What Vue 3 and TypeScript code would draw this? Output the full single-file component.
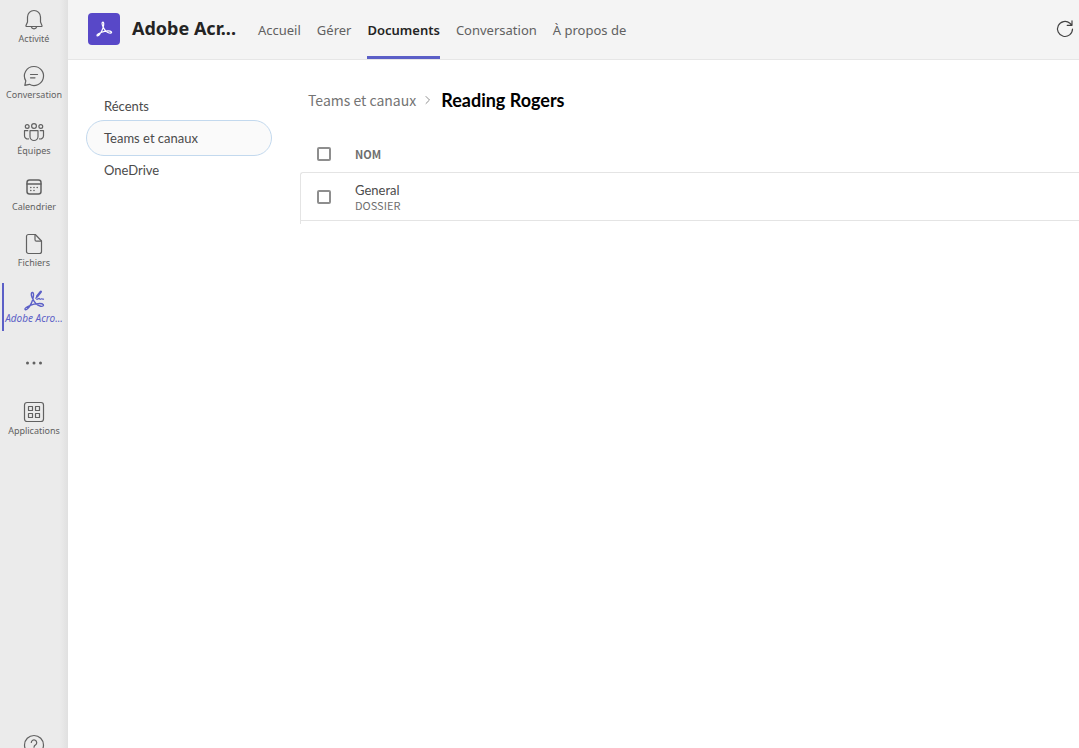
<script setup lang="ts">
import { ref } from 'vue'

interface RailItem {
  id: string
  label: string
}

const railItems: RailItem[] = [
  { id: 'activity', label: 'Activité' },
  { id: 'chat', label: 'Conversation' },
  { id: 'teams', label: 'Équipes' },
  { id: 'calendar', label: 'Calendrier' },
  { id: 'files', label: 'Fichiers' },
  { id: 'acrobat', label: 'Adobe Acro...' },
]
const tabs: string[] = ['Accueil', 'Gérer', 'Documents', 'Conversation', 'À propos de']
const sources: string[] = ['Récents', 'Teams et canaux', 'OneDrive']
const rows = ref([{ name: 'General', kind: 'DOSSIER', checked: false }])

const activeRail = ref('acrobat')
const activeTab = ref('Documents')
const activeSource = ref('Teams et canaux')
const allChecked = ref(false)

function toggleAll(): void {
  rows.value.forEach((row) => (row.checked = allChecked.value))
}
</script>

<template>
  <div class="app">
    <nav class="rail" aria-label="Applications">
      <button
        v-for="item in railItems"
        :key="item.id"
        type="button"
        class="rail-item"
        :class="{ active: activeRail === item.id }"
        @click="activeRail = item.id"
      >
        <svg class="icon" viewBox="0 0 24 24" aria-hidden="true">
          <g v-if="item.id === 'activity'">
            <path d="M12 2.500a6.500 6.500 0 0 0-6.500 6.500v5L4 17.600c-.2.5.1.9.6.9h14.800c.5 0 .8-.4.6-.9L18.500 14V9A6.500 6.500 0 0 0 12 2.500z" />
            <path d="M9.200 18.700a2.900 2.900 0 0 0 5.600 0" />
          </g>
          <g v-else-if="item.id === 'chat'">
            <path d="M12 2.500a9.500 9.500 0 1 1-4.600 17.800L2.800 21.400l1-4.500A9.500 9.500 0 0 1 12 2.500z" />
            <path d="M8.500 10.500h7M8.500 13.800h4.500" />
          </g>
          <g v-else-if="item.id === 'teams'">
            <circle cx="12" cy="6" r="2.400" />
            <circle cx="5.200" cy="6.500" r="1.900" />
            <circle cx="18.800" cy="6.500" r="1.900" />
            <path d="M8 10.700h8v5.800a4 4 0 0 1-8 0z" />
            <path d="M5.800 10.700H2.500v5a3.300 3.300 0 0 0 4 3.200M18.200 10.700h3.300v5a3.300 3.300 0 0 1-4 3.200" />
          </g>
          <g v-else-if="item.id === 'calendar'" class="calendar">
            <rect x="5" y="4" width="14" height="14" rx="2.500" />
            <path d="M5 8h14" />
            <path class="dots" d="M8.800 11.500h.01M12 11.500h.01M15.200 11.500h.01M8.800 14.500h.01M12 14.500h.01" />
          </g>
          <g v-else-if="item.id === 'files'">
            <path d="M6.500 2.500h6.800L19.500 9v10.500a2 2 0 0 1-2 2h-11a2 2 0 0 1-2-2v-15a2 2 0 0 1 2-2z" />
            <path d="M13 2.700v5a1.500 1.500 0 0 0 1.500 1.500h4.800" />
          </g>
          <g v-else>
            <path class="loop" d="M10.600 4.500c-1.700-.3-1.500 2.500-.6 4.800 1.500 3.900 4.500 7.900 8.600 8.900 2 .5 3.300-.5 2.700-1.600-1.200-1.700-8.200-1.200-13 .8-3.300 1.400-6 2.800-5.300 4 .9 1.400 4.400-2 6.400-6.300 1.700-3.700 3.100-10.200 1.200-10.600z" />
            <path class="pen" d="M15.200 8.200l3.600-4.500" />
            <path d="M13.800 10.300l1.400-2.100M14.800 11.300c1.200 0 1.700-1 2.300-.9.500.1.300.9 1 .9.800 0 1-.7 1.700-.5.600.2.900.5 1.700.4" />
          </g>
        </svg>
        <span>{{ item.label }}</span>
      </button>
      <button type="button" class="rail-item more" aria-label="Plus">
        <svg class="icon" viewBox="0 0 24 24" aria-hidden="true">
          <g class="solid"><circle cx="5.500" cy="12" r="1.500" /><circle cx="12" cy="12" r="1.500" /><circle cx="18.500" cy="12" r="1.500" /></g>
        </svg>
      </button>
      <button type="button" class="rail-item">
        <svg class="icon" viewBox="0 0 24 24" aria-hidden="true">
          <rect x="2.500" y="2.500" width="19" height="19" rx="2.500" />
          <path d="M6.500 6.500h4v4h-4zM13.500 6.500h4v4h-4zM6.500 13.500h4v4h-4zM13.500 13.500h4v4h-4z" />
        </svg>
        <span>Applications</span>
      </button>
      <button type="button" class="rail-item help" aria-label="Aide">
        <svg class="icon" viewBox="0 0 24 24" aria-hidden="true">
          <circle cx="12" cy="12" r="9.500" />
          <path d="M9.300 9.500a2.700 2.700 0 1 1 4.300 2.300c-1 .7-1.600 1.200-1.600 2.400M12 17v.2" />
        </svg>
      </button>
    </nav>

    <div class="main">
      <header class="header">
        <span class="logo">
          <svg viewBox="0 0 32 32" aria-hidden="true">
            <path d="M15 9.200c-1.300 0-1.200 2 0 4.500 1.500 3.200 3.500 5.600 6.100 6.300 1.800.4 3-.3 2.300-1.200-1.200-1.500-6-1.100-9.700.4-2.800 1.100-5.300 2.400-4.700 3.400.9 1.300 3.400-1.800 5-5.200 1.400-2.900 2.500-8 1-8.200z" />
          </svg>
        </span>
        <h1>Adobe Acr...</h1>
        <nav class="tabs" aria-label="Onglets">
          <button
            v-for="tab in tabs"
            :key="tab"
            type="button"
            class="tab"
            :class="{ active: activeTab === tab }"
            @click="activeTab = tab"
          >
            {{ tab }}
          </button>
        </nav>
        <button type="button" class="refresh" aria-label="Actualiser">
          <svg viewBox="0 0 20 20" aria-hidden="true">
            <path d="M17.500 10a7.500 7.500 0 1 1-2.600-5.700l1.800 1.700M17 1.800V6.300h-4.800" />
          </svg>
        </button>
      </header>

      <div class="body">
        <nav class="sources" aria-label="Emplacements">
          <button
            v-for="source in sources"
            :key="source"
            type="button"
            class="source"
            :class="{ active: activeSource === source }"
            @click="activeSource = source"
          >
            {{ source }}
          </button>
        </nav>

        <main class="content">
          <div class="crumbs">
            <a href="#">Teams et canaux</a>
            <svg viewBox="0 0 8 10" aria-hidden="true"><path d="M2 1.500 5.500 5 2 8.500" /></svg>
            <h2>Reading Rogers</h2>
          </div>
          <table>
            <thead>
              <tr>
                <th class="pick">
                  <input v-model="allChecked" type="checkbox" aria-label="Tout sélectionner" @change="toggleAll" />
                </th>
                <th>NOM</th>
              </tr>
            </thead>
            <tbody>
              <tr v-for="row in rows" :key="row.name">
                <td class="pick">
                  <input v-model="row.checked" type="checkbox" :aria-label="row.name" />
                </td>
                <td>
                  <div class="name">{{ row.name }}</div>
                  <div class="kind">{{ row.kind }}</div>
                </td>
              </tr>
            </tbody>
          </table>
          <div class="table-end"></div>
        </main>
      </div>
    </div>
  </div>
</template>

<style>
body {
  margin: 0;
  background: #fff;
}
</style>

<style scoped>
* {
  box-sizing: border-box;
}
.app {
  display: flex;
  height: 100vh;
  overflow: hidden;
  font-family: "Noto Sans", "Open Sans", sans-serif;
}
button {
  margin: 0;
  padding: 0;
  border: 0;
  background: none;
  font: inherit;
  color: inherit;
  cursor: pointer;
}
svg {
  display: block;
  fill: none;
  stroke: currentColor;
  stroke-linecap: round;
  stroke-linejoin: round;
}
.rail {
  display: flex;
  flex-direction: column;
  flex: none;
  width: 68px;
  overflow: hidden;
  color: #616161;
  background: linear-gradient(to right, #ebebeb 60px, #e0e0e0);
}
.rail-item {
  display: flex;
  flex-direction: column;
  align-items: center;
  flex: none;
  height: 56px;
  padding-top: 8px;
  font-size: 9px;
  line-height: 14px;
  white-space: nowrap;
}
.icon {
  width: 24px;
  height: 24px;
  stroke-width: 1.2;
}
.rail-item.active {
  color: #5b5fc7;
  font-size: 10px;
  font-style: italic;
  line-height: 12px;
  position: relative;
}
.rail-item.active::before {
  content: "";
  position: absolute;
  left: 2px;
  top: 3px;
  width: 2px;
  height: 48px;
  background: #5b5fc7;
}
.calendar {
  stroke-width: 1.5;
}
.dots {
  stroke-width: 1.6;
}
.loop {
  stroke-width: 1.4;
}
.pen {
  stroke-width: 2.4;
}
.solid {
  fill: currentColor;
  stroke: none;
}
.more {
  padding-top: 15px;
}
.help {
  height: 15px;
  padding-top: 0;
  margin-top: auto;
}
.help .icon {
  flex: none;
}
.main {
  display: flex;
  flex-direction: column;
  flex: 1;
  min-width: 0;
}
.header {
  display: flex;
  align-items: center;
  height: 60px;
  padding: 0 4px 2px 20px;
  background: #f4f4f4;
  border-bottom: 1px solid #e6e6e6;
}
.logo {
  width: 32px;
  height: 32px;
  color: #fff;
  background: #5848c8;
  border-radius: 4px;
}
.logo svg {
  stroke-width: 1.2;
}
h1 {
  margin: 0 22px 2px 12px;
  font-size: 18px;
  line-height: 24px;
  font-weight: 700;
  color: #242424;
  white-space: nowrap;
}
.tabs {
  display: flex;
  align-self: stretch;
  gap: 16px;
  margin-bottom: -2px;
}
.tab {
  padding-top: 3px;
  font-size: 13px;
  color: #616161;
  border-bottom: 3px solid transparent;
  white-space: nowrap;
}
.tab.active {
  font-weight: 600;
  color: #242424;
  border-bottom-color: #5b5fc7;
}
.refresh {
  margin-left: auto;
  color: #424242;
}
.refresh svg {
  width: 20px;
  height: 20px;
  stroke-width: 1.2;
}
.body {
  display: flex;
  flex: 1;
  gap: 28px;
  padding-left: 18px;
  font-family: "Noto Sans CJK SC", "Noto Sans", sans-serif;
}
.sources {
  display: flex;
  flex-direction: column;
  flex: none;
  width: 186px;
  padding-top: 32px;
}
.source {
  height: 28px;
  padding: 0 17px;
  border: 1px solid transparent;
  border-radius: 18px;
  font-family: Lato, sans-serif;
  font-size: 13px;
  line-height: 20px;
  text-align: left;
  color: #4b4b4b;
}
.source.active {
  height: 36px;
  background: #fafafa;
  border-color: #c3d9ee;
}
.content {
  flex: 1;
  min-width: 0;
  padding-top: 28px;
}
.crumbs {
  display: flex;
  align-items: center;
  height: 24px;
  padding-left: 8px;
}
.crumbs a {
  font-size: 14px;
  color: #747474;
  text-decoration: none;
}
.crumbs svg {
  width: 8px;
  height: 10px;
  margin: 0 9px 0 8px;
  color: #909090;
}
h2 {
  margin: 0;
  font-family: Lato, sans-serif;
  font-size: 18px;
  font-weight: 700;
  color: #000;
}
table {
  width: 100%;
  margin-top: 24px;
  border-collapse: separate;
  border-spacing: 0;
}
th,
td {
  padding: 0;
  text-align: left;
}
th {
  height: 36px;
  font-size: 11px;
  font-weight: 700;
  color: #6e6e6e;
}
td {
  height: 49px;
  border-top: 1px solid #e4e4e4;
  border-bottom: 1px solid #e4e4e4;
}
.pick {
  width: 55px;
  padding-left: 17px;
}
td.pick {
  padding-left: 16px;
  border-left: 1px solid #e4e4e4;
  border-top-left-radius: 3px;
}
.table-end {
  height: 3px;
  border-left: 1px solid #e4e4e4;
}
input {
  display: block;
  appearance: none;
  width: 14px;
  height: 14px;
  margin: 0;
  border: 2px solid #8e8e8e;
  border-radius: 2px;
  background: #fff;
}
input:checked {
  background: #5b5fc7;
}
.name {
  font-family: Lato, sans-serif;
  font-size: 13px;
  line-height: 16px;
  color: #4b4b4b;
}
.kind {
  font-size: 11px;
  line-height: 14px;
  color: #6e6e6e;
}
</style>
